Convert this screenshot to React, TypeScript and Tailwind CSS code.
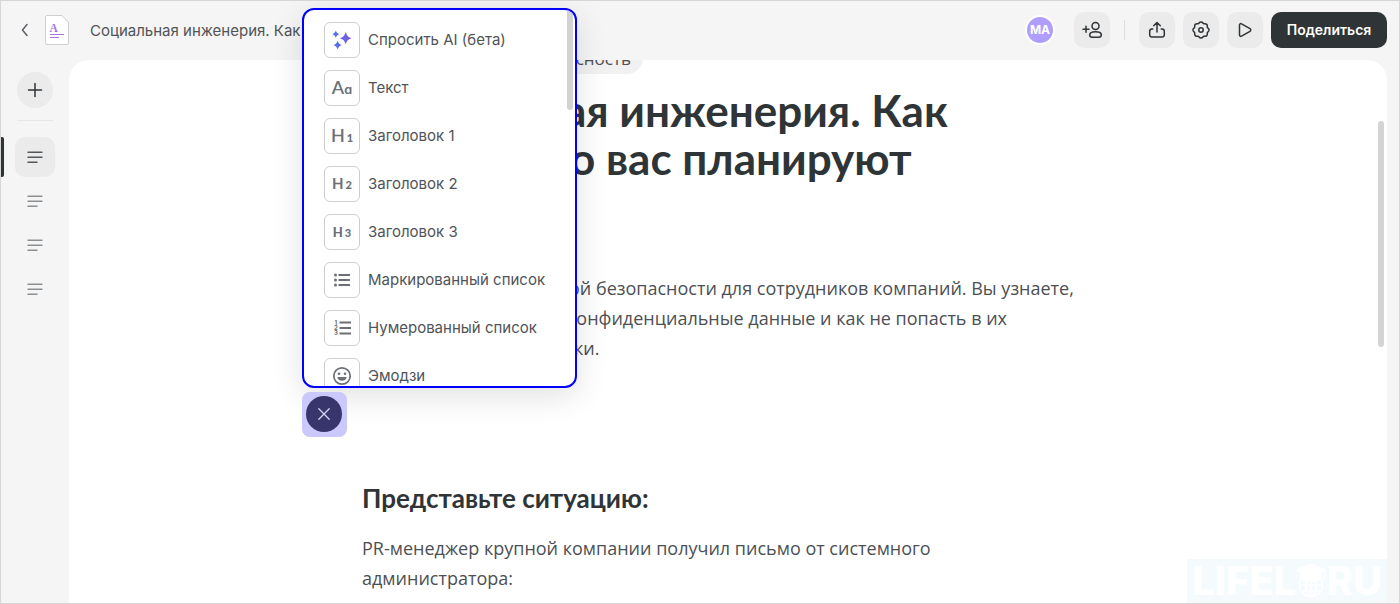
import type { ReactNode } from "react";

function Glyph({ children, size = 20 }: { children: ReactNode; size?: number }) {
  return (
    <svg
      width={size}
      height={size}
      viewBox={`0 0 ${size} ${size}`}
      fill="none"
      stroke="currentColor"
      strokeWidth="1.5"
      strokeLinecap="round"
      strokeLinejoin="round"
      aria-hidden="true"
    >
      {children}
    </svg>
  );
}

function ToolButton({ label, children }: { label: string; children: ReactNode }) {
  return (
    <button aria-label={label} className="flex size-9 items-center justify-center rounded-[10px] bg-[#ebebeb] text-[#2f3437]">
      {children}
    </button>
  );
}

function Header() {
  return (
    <header className="flex h-[59px] shrink-0 items-center pr-3 pb-px pl-4">
      <button aria-label="Назад" className="flex size-4 items-center justify-center text-[#5c6166]">
        <Glyph size={16}>
          <path d="M10 2.500 5.500 8l4.500 5.500" />
        </Glyph>
      </button>
      <svg width="24" height="30" viewBox="0 0 24 30" aria-hidden="true" className="ml-3">
        <path d="M2 .5H17l6.500 7V28a1.500 1.500 0 0 1-1.500 1.500H2A1.500 1.500 0 0 1 .5 28V2A1.500 1.500 0 0 1 2 .5Z" fill="#fff" stroke="#cfcfcf" />
        <text x="4.500" y="17" fontFamily="Liberation Serif, serif" fontWeight="700" fontSize="11.500" fill="#a874e0">A</text>
        <path d="M5 19.500h14M5 22.500h9" stroke="#a874e0" strokeWidth="1.200" />
      </svg>
      <span className="ml-[21px] min-w-0 flex-1 truncate pt-0.5 text-[15px] text-[#505457]">Социальная инженерия. Как</span>
      <div className="flex items-center">
        <span className="flex size-[30px] items-center justify-center rounded-full border-2 border-white bg-[#b09eff] text-xs font-bold text-white">MA</span>
        <div className="ml-[19px] flex">
          <ToolButton label="Пригласить">
            <Glyph>
              <circle cx="13.500" cy="6" r="3.500" />
              <path d="M13.500 11.800c3.400 0 5.800 1.300 5.800 3.200 0 1.500-.9 2.200-2.500 2.200h-6.600c-1.600 0-2.500-.7-2.500-2.200 0-1.900 2.400-3.200 5.800-3.200ZM4 6.200v6M1 9.200h6" />
            </Glyph>
          </ToolButton>
        </div>
        <span className="mx-3.5 h-5 w-px bg-[#dfdfdf]" />
        <div className="flex gap-2">
          <ToolButton label="Экспорт">
            <Glyph>
              <path d="M10 12V2.800M6.700 5.800 10 2.500l3.300 3.300M5.800 9H5C3.500 9 2.700 9.800 2.700 11.300v3.400c0 1.500.8 2.300 2.300 2.300h10c1.500 0 2.300-.8 2.300-2.300v-3.400C17.300 9.800 16.500 9 15 9h-.8" />
            </Glyph>
          </ToolButton>
          <ToolButton label="Настройки">
            <Glyph>
              <path d="M8.100 3c.9-1.400 2.900-1.400 3.800 0 .4.600 1 .9 1.700.7 1.600-.3 3.100 1.200 2.700 2.800-.1.700.1 1.300.7 1.700 1.400.9 1.400 2.700 0 3.600-.6.400-.8 1-.7 1.700.4 1.600-1.100 3.100-2.700 2.800-.7-.2-1.300.1-1.700.7-.9 1.400-2.900 1.400-3.800 0-.4-.6-1-.9-1.700-.7-1.600.3-3.100-1.200-2.700-2.800.1-.7-.1-1.300-.7-1.700-1.400-.9-1.400-2.700 0-3.600.6-.4.800-1 .7-1.700-.4-1.600 1.100-3.100 2.700-2.800.7.2 1.300-.1 1.700-.7Z" />
              <circle cx="10" cy="10" r="2.200" />
            </Glyph>
          </ToolButton>
          <ToolButton label="Просмотр">
            <Glyph>
              <path d="M4.500 5c0-1.100 1-1.700 2-1.200l8.500 4.900c1 .6 1 2 0 2.600l-8.500 4.900c-1 .5-2-.1-2-1.200Z" />
            </Glyph>
          </ToolButton>
          <button className="h-9 w-[116px] rounded-[10px] bg-[#2f3437] text-sm font-semibold text-white">Поделиться</button>
        </div>
      </div>
    </header>
  );
}

function Rail() {
  return (
    <nav aria-label="Страницы" className="flex w-[68px] shrink-0 flex-col items-center pt-3">
      <button aria-label="Добавить страницу" className="flex size-9 items-center justify-center rounded-full bg-[#ebebeb] text-[#2f3437]">
        <Glyph>
          <path d="M10 3.500v13M3.500 10h13" />
        </Glyph>
      </button>
      <span className="mt-3 h-px w-9 bg-[#e6e6e6]" />
      <ul className="mt-4 flex w-full flex-col gap-1">
        {[1, 2, 3, 4].map((page) => (
          <li key={page} className="flex items-center">
            <span className={page === 1 ? "h-10 w-[3px] rounded-r-xs bg-[#2f3437]" : "h-10 w-[3px]"} />
            <button
              aria-label={`Страница ${page}`}
              className={
                page === 1
                  ? "ml-[11px] flex size-10 items-center justify-center rounded-[10px] bg-[#ebebeb] text-[#54585b]"
                  : "ml-[11px] flex size-10 items-center justify-center rounded-[10px] text-[#8b8f94]"
              }
            >
              <Glyph>
                <path d="M3 5.300h14M3 10.300h14M3 15.300h9" strokeWidth="1.400" />
              </Glyph>
            </button>
          </li>
        ))}
      </ul>
    </nav>
  );
}

function Heading({ level, big }: { level: string; big: string }) {
  return (
    <span className="flex items-baseline gap-0.5 font-['Lato',sans-serif] leading-5">
      <span className={big}>H</span>
      <span className="text-[11px] font-black">{level}</span>
    </span>
  );
}

const blocks: { label: string; icon: ReactNode }[] = [
  {
    label: "Спросить AI (бета)",
    icon: (
      <svg width="20" height="20" viewBox="0 0 20 20" aria-hidden="true">
        <defs>
          <linearGradient id="spark" x1="0" x2="1">
            <stop offset="0" stopColor="#4a78f0" />
            <stop offset="1" stopColor="#8257e5" />
          </linearGradient>
        </defs>
        <path
          fill="url(#spark)"
          d="M13.700 2c1.400 4 2.100 4.800 5.900 6.200-3.800 1.400-4.500 2.200-5.900 6.200-1.400-4-2.100-4.800-5.900-6.200 3.800-1.400 4.500-2.200 5.900-6.200ZM3.800.6C4.700 2.900 5.200 3.300 7.400 4.200 5.200 5.100 4.700 5.500 3.800 7.800 2.900 5.500 2.400 5.100.2 4.200 2.400 3.300 2.900 2.900 3.800.6ZM5.600 10.700c1.100 2.700 1.700 3.300 4.300 4.400-2.600 1.100-3.200 1.700-4.300 4.400-1.100-2.700-1.700-3.300-4.300-4.400 2.600-1.100 3.200-1.700 4.300-4.400Z"
        />
      </svg>
    ),
  },
  {
    label: "Текст",
    icon: (
      <span className="flex items-baseline font-['Lato',sans-serif] text-sm leading-5 font-bold">
        <span className="text-lg leading-5 font-semibold">A</span>ɑ
      </span>
    ),
  },
  { label: "Заголовок 1", icon: <Heading level="1" big="text-lg leading-5 font-semibold" /> },
  { label: "Заголовок 2", icon: <Heading level="2" big="text-[15px] leading-5 font-bold" /> },
  { label: "Заголовок 3", icon: <Heading level="3" big="text-[13px] leading-5 font-black" /> },
  {
    label: "Маркированный список",
    icon: (
      <svg width="20" height="20" viewBox="0 0 20 20" stroke="currentColor" fill="currentColor" aria-hidden="true">
        <path d="M6.500 5H18M6.500 10H18M6.500 15H18" strokeWidth="1.800" />
        <g stroke="none">
          <circle cx="3.500" cy="5" r="1.500" />
          <circle cx="3.500" cy="10" r="1.500" />
          <circle cx="3.500" cy="15" r="1.500" />
        </g>
      </svg>
    ),
  },
  {
    label: "Нумерованный список",
    icon: (
      <svg width="20" height="20" viewBox="0 0 20 20" stroke="currentColor" fill="none" aria-hidden="true">
        <path d="M7.500 4.500H19M7.500 10H19M7.500 15.500H19" strokeWidth="1.800" />
        <g stroke="none" fill="currentColor" fontFamily="Inter, sans-serif" fontSize="6" fontWeight="700">
          <text x="2.500" y="6.500">1</text>
          <text x="2" y="11.500">2</text>
          <text x="2" y="16.500">3</text>
        </g>
      </svg>
    ),
  },
  {
    label: "Эмодзи",
    icon: (
      <svg width="20" height="20" viewBox="0 0 20 20" fill="none" stroke="currentColor" aria-hidden="true">
        <circle cx="10" cy="10" r="8.200" strokeWidth="1.700" />
        <g fill="currentColor" stroke="none">
          <circle cx="7" cy="7.800" r="1.300" />
          <circle cx="13" cy="7.800" r="1.300" />
          <path d="M5.300 11h9.400a4.800 4.800 0 0 1-9.400 0Z" />
        </g>
      </svg>
    ),
  },
];

function BlockMenu() {
  return (
    <div className="flex h-[380px] w-[275px] overflow-hidden rounded-xl border-2 border-[#0000ff] bg-white shadow-[0_8px_32px_rgba(0,0,0,0.12)]">
      <ul className="flex flex-1 flex-col gap-3 pt-3 pl-5">
        {blocks.map(({ label, icon }) => (
          <li key={label}>
            <button className="flex items-center gap-2 text-[15px] whitespace-nowrap text-[#505457]">
              <span className="flex size-9 items-center justify-center rounded-md border border-[#cdcfd1] text-[#6b7076]">{icon}</span>
              {label}
            </button>
          </li>
        ))}
      </ul>
      <span className="mr-0.5 h-[100px] w-1.5 shrink-0 rounded-b-full bg-[#d2d2d2]" />
    </div>
  );
}

function Watermark() {
  return (
    <div className="absolute right-0 bottom-0 flex h-11 w-[200px] items-center justify-center bg-[#f5fbfd] text-[40px] leading-none font-extrabold text-white">
      LIFEL
      <svg width="30" height="34" viewBox="0 0 30 34" fill="none" stroke="#fff" strokeWidth="1.500" aria-hidden="true">
        <path d="M15 0 30 6 15 12 0 6Z" fill="#fff" />
        <path d="M5 8v7q10 5 20 0V8L15 12Z" fill="#fff" />
        <circle cx="15" cy="21" r="11.500" />
        <ellipse cx="15" cy="21" rx="5" ry="11.500" />
        <path d="M3.500 21h23M5 27h20M15 10v23M28.500 6v10" />
      </svg>
      RU
    </div>
  );
}

export default function App() {
  return (
    <div className="flex h-screen flex-col overflow-hidden border border-[#d6d6d6] bg-[#f5f5f5] font-['Inter',sans-serif]">
      <Header />
      <div className="flex min-h-0 flex-1">
        <Rail />
        <main className="relative mr-3 min-w-0 flex-1">
          <div className="h-full overflow-hidden rounded-t-[20px] bg-white px-6">
            <article className="mx-auto max-w-[732px] font-['Open_Sans',sans-serif] text-lg leading-[30px] text-[#4c5053]">
              <span className="-mt-[18px] ml-[150px] flex h-8 w-[131px] items-center justify-end rounded-full bg-[#f1f1f1] pt-0.5 pr-3 text-[17px]">сность</span>
              <h1 className="mt-3 font-['Lato',sans-serif] text-[44px] leading-[48px] font-bold text-[#2f3437]">
                <span className="block pl-[202px]">ая инженерия. Как</span>
                <span className="block pl-[208px]">о вас планируют</span>
              </h1>
              <p className="mt-[91px]">
                <span className="block pl-[207px]">ой безопасности для сотрудников компаний. Вы узнаете,</span>
                <span className="block pl-[205px]">конфиденциальные данные и как не попасть в их</span>
                <span className="block pl-[212px]">ки.</span>
              </p>
              <h2 className="mt-[119px] font-['Lato',sans-serif] text-[26px] leading-8 font-bold text-[#2f3437]">Представьте ситуацию:</h2>
              <p className="mt-[19px] max-w-[600px]">PR-менеджер крупной компании получил письмо от системного администратора:</p>
            </article>
          </div>
          <span className="absolute top-[61px] right-[3px] h-[226px] w-1.5 rounded-full bg-[#d4d4d4]" />
          <Watermark />
          <div className="absolute inset-x-0 -top-[52px] mx-auto w-[732px]">
            <div className="-ml-[60px] flex flex-col items-start gap-1">
              <BlockMenu />
              <span className="size-[45px] rounded-lg bg-[#cbc8fb] p-1">
                <button aria-label="Закрыть меню" className="flex size-9 items-center justify-center rounded-full bg-[#37356b] text-[#d6d4f5]">
                  <Glyph>
                    <path d="m4.800 4.800 10.400 10.400M15.200 4.800 4.800 15.200" strokeWidth="1.300" />
                  </Glyph>
                </button>
              </span>
            </div>
          </div>
        </main>
      </div>
    </div>
  );
}
